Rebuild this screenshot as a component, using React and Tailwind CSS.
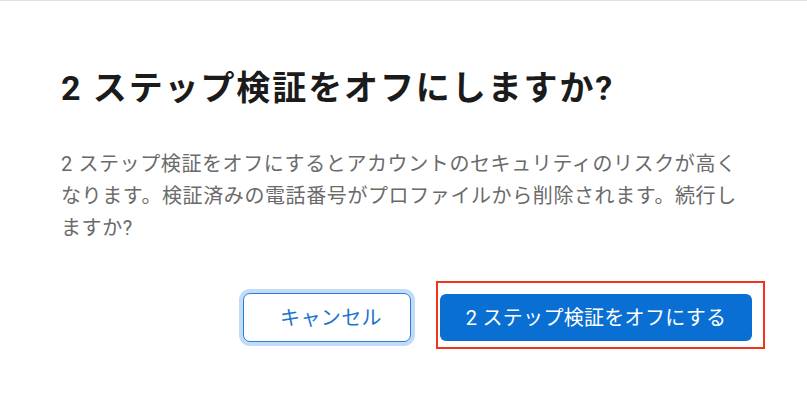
import React from "react";

export default function App() {
  return (
    <div
      className="w-[807px] h-[406px] bg-white border-t border-[#e2e2e2] pl-[61px] pr-[42px] pt-[67px] flex flex-col overflow-hidden"
      style={{ fontFamily: '"Roboto", "Noto Sans CJK JP", sans-serif' }}
    >
      <h1 className="text-[34px] leading-[40px] font-bold tracking-[1.9px] text-[#1b1b1b]">
        2 ステップ検証をオフにしますか?
      </h1>
      <p className="mt-[40px] max-w-[686px] text-[20px] leading-[32px] tracking-[0.6px] text-[#6a6a6a]">
        2 ステップ検証をオフにするとアカウントのセキュリティのリスクが高くなります。検証済みの電話番号がプロファイルから削除されます。続行しますか?
      </p>
      <div className="mt-[37px] flex justify-end items-center gap-[25px]">
        <button className="mt-[5px] w-[168px] h-[49px] pl-[8px] rounded-[7px] border-[1.5px] border-[#2b7ed6] ring-4 ring-[#c2dcf8] bg-white text-[20px] tracking-[0.4px] text-[#1c74cc]">
          キャンセル
        </button>
        <div className="border-2 border-[#f1341b] pl-[2px] pr-[11px] pt-[11px] pb-[6px]">
          <button className="w-[312px] h-[47px] rounded-[6px] bg-[#0a6fd2] text-white text-[20px] tracking-[0.3px]">
            2 ステップ検証をオフにする
          </button>
        </div>
      </div>
    </div>
  );
}
